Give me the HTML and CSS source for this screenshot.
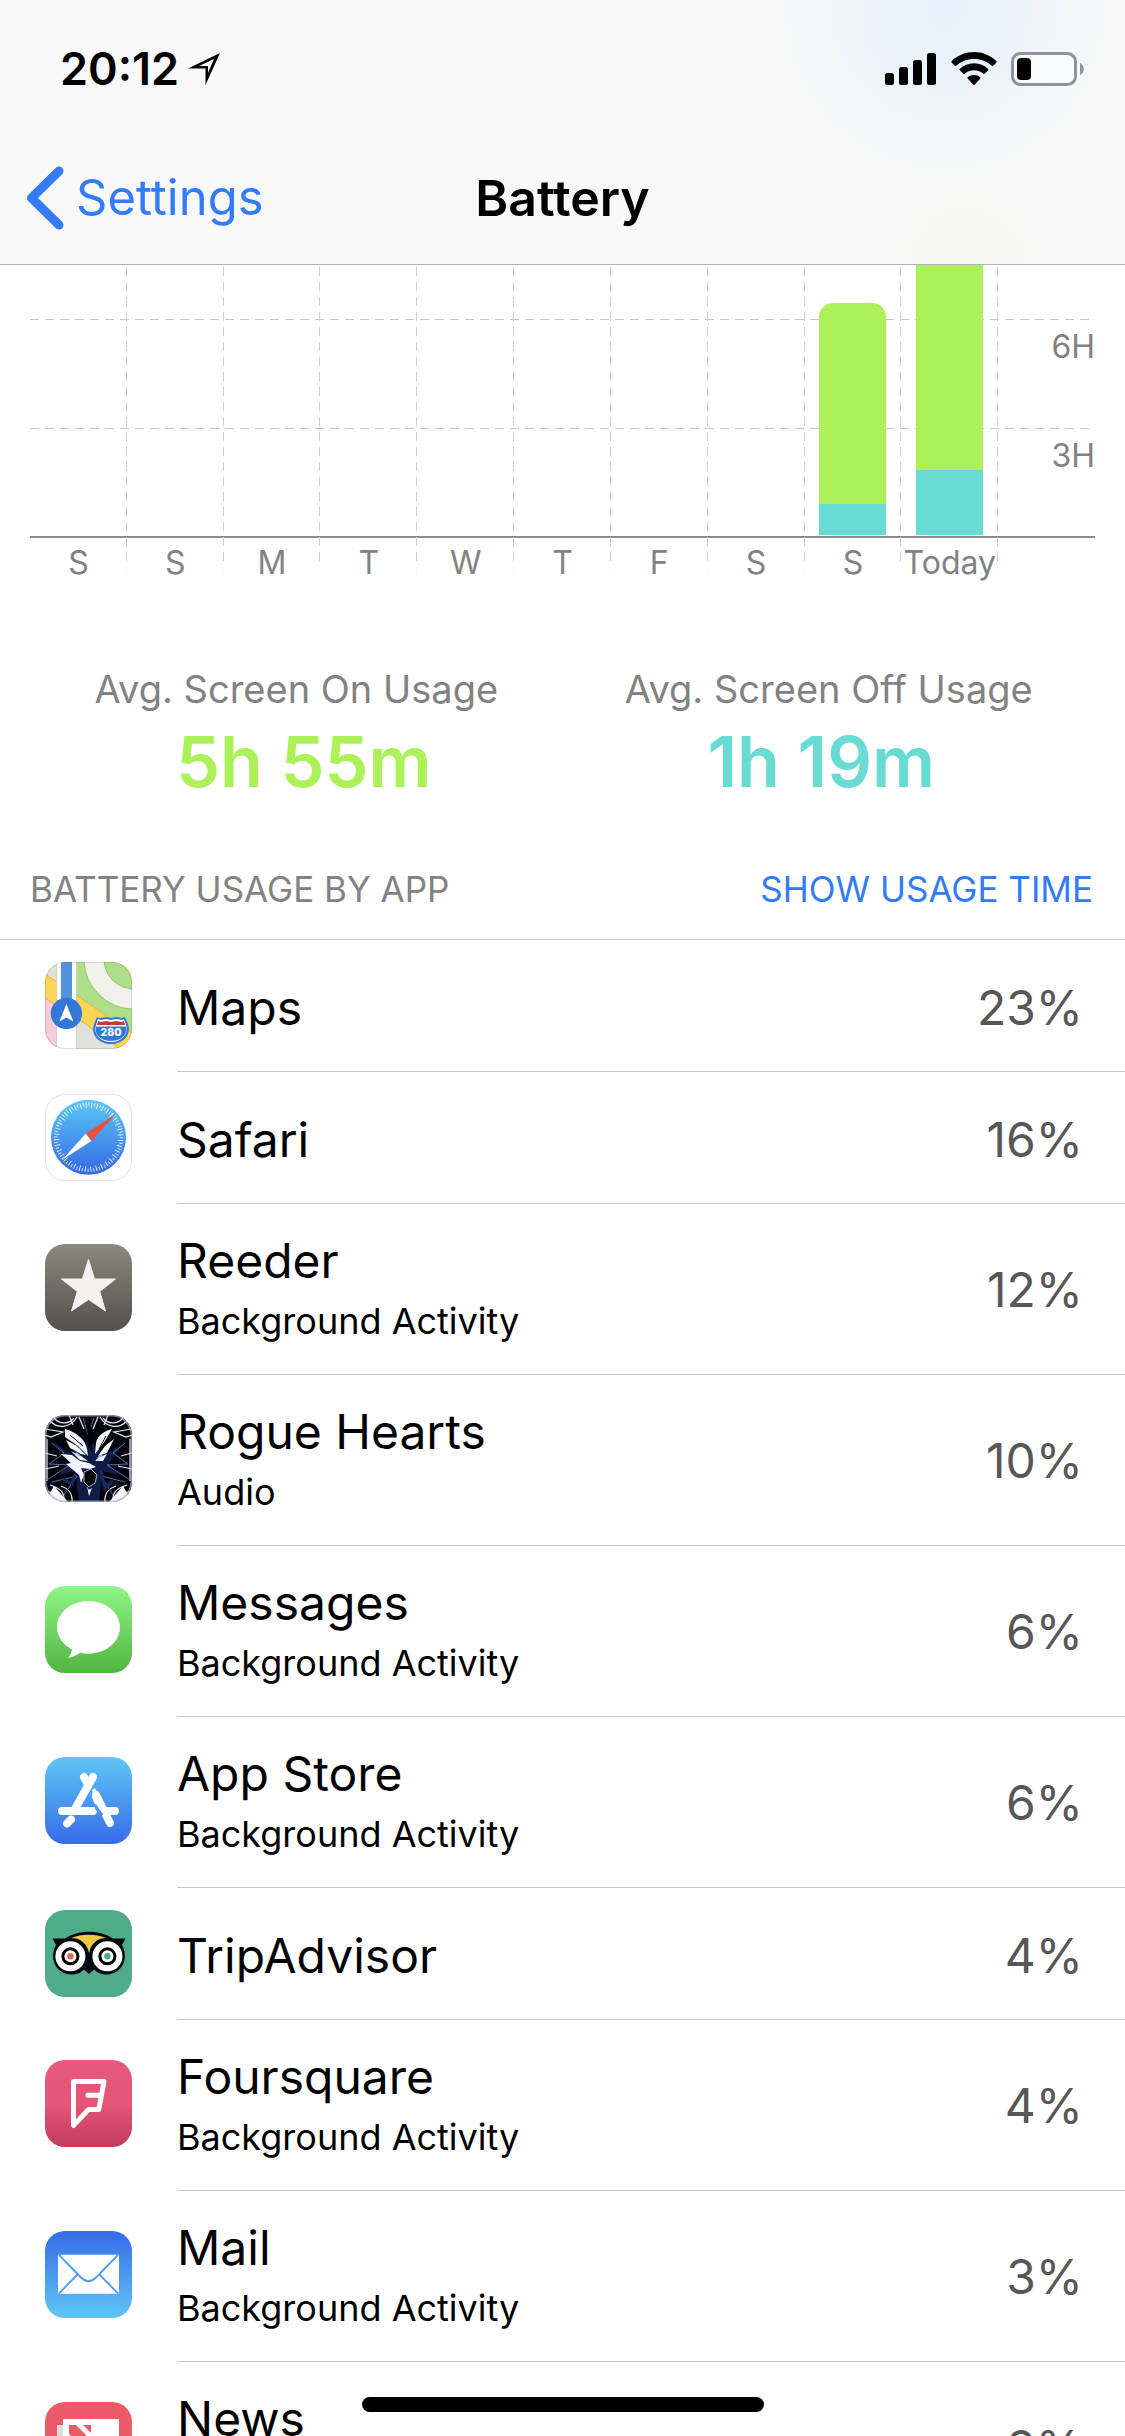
FILE: index.html
```html
<!DOCTYPE html>
<html lang="en">
<head>
<meta charset="utf-8">
<meta name="viewport" content="width=device-width, initial-scale=1">
<title>Battery</title>
<link rel="stylesheet" href="styles.css">
</head>
<body>
<div class="screen">
  <header class="top">
    <div class="status">
      <div class="status-left">
        <time>20:12</time>
        <svg width="34" height="34" viewBox="0 0 34 34" aria-hidden="true"><path fill="#000" fill-rule="evenodd" d="M33 1 18.500 33V16.500H1ZM27 7 12 14H21V21Z"/></svg>
      </div>
      <div class="status-right">
        <svg width="52" height="34" viewBox="0 0 52 34" aria-hidden="true"><rect x="0" y="21" width="9" height="12" rx="2.500"/><rect x="14" y="15" width="9" height="18" rx="2.500"/><rect x="28" y="8" width="9" height="25" rx="2.500"/><rect x="42" y="1" width="9" height="32" rx="2.500"/></svg>
        <svg width="46" height="34" viewBox="0 0 46 34" aria-hidden="true"><path d="M23 0C14.500 0 6.500 3.300.600 9.200a.8.800 0 0 0 0 1.200L4 13.800a.8.800 0 0 0 1.200 0C10 9.300 16 6.900 23 6.900s13 2.400 17.800 6.900a.8.800 0 0 0 1.200 0l3.400-3.400a.8.800 0 0 0 0-1.200C39.500 3.300 31.500 0 23 0ZM23 11.300c-5.500 0-10.400 2.200-14.200 5.700a.8.800 0 0 0 0 1.200l3.600 3.600a.8.800 0 0 0 1.100 0c2.600-2.400 5.800-3.600 9.500-3.600s6.900 1.200 9.500 3.600a.8.800 0 0 0 1.100 0l3.600-3.600a.8.800 0 0 0 0-1.200C33.400 13.500 28.500 11.300 23 11.300ZM23 23c-2.400 0-4.600.8-6.300 2.300a.8.800 0 0 0 0 1.200l5.700 6.200a.8.800 0 0 0 1.200 0l5.700-6.200a.8.800 0 0 0 0-1.200C27.600 23.800 25.400 23 23 23Z"/></svg>
        <svg width="74" height="34" viewBox="0 0 74 34" aria-hidden="true"><rect x="1.500" y="1.500" width="63" height="31" rx="8" fill="#fff" fill-opacity=".5" stroke="#929394" stroke-width="3"/><rect x="6" y="6" width="14" height="22" rx="4"/><path d="M69 11c5 2 5 10 0 12Z" fill="#929394"/></svg>
      </div>
    </div>
    <nav class="nav">
      <a class="back" href="#settings"><svg width="38" height="64" viewBox="0 0 38 64" aria-hidden="true"><path d="M33 5 5.500 32 33 59" fill="none" stroke="#347bf7" stroke-width="9" stroke-linecap="round" stroke-linejoin="round"/></svg><span>Settings</span></a>
      <h1>Battery</h1>
    </nav>
  </header>

  <main>
    <section class="chart" aria-label="Usage by day">
      <div class="hours">
        <div class="hour"></div>
        <div class="hour"><span>6H</span></div>
        <div class="hour"><span>3H</span></div>
      </div>
      <div class="days">
        <div class="day"><div class="plot"></div><span>S</span></div>
        <div class="day"><div class="plot"></div><span>S</span></div>
        <div class="day"><div class="plot"></div><span>M</span></div>
        <div class="day"><div class="plot"></div><span>T</span></div>
        <div class="day"><div class="plot"></div><span>W</span></div>
        <div class="day"><div class="plot"></div><span>T</span></div>
        <div class="day"><div class="plot"></div><span>F</span></div>
        <div class="day"><div class="plot"></div><span>S</span></div>
        <div class="day"><div class="plot"><div class="bar rounded" style="height:232px"><i style="height:31px"></i></div></div><span>S</span></div>
        <div class="day"><div class="plot"><div class="bar" style="height:270px"><i style="height:65px"></i></div></div><span>Today</span></div>
      </div>
    </section>

    <section class="totals">
      <div class="total-labels"><span>Avg. Screen On Usage</span><span>Avg. Screen Off Usage</span></div>
      <div class="total-values"><strong class="on">5h 55m</strong><strong class="off">1h 19m</strong></div>
    </section>

    <div class="list-head">
      <h2>BATTERY USAGE BY APP</h2>
      <button type="button">SHOW USAGE TIME</button>
    </div>

    <svg class="defs" width="0" height="0" aria-hidden="true">
      <defs>
        <clipPath id="tile"><rect width="87" height="87" rx="20"/></clipPath>
        <linearGradient id="g-safari" x2="0" y2="1"><stop stop-color="#5ac8f7"/><stop offset="1" stop-color="#3668e6"/></linearGradient>
        <linearGradient id="g-reeder" x2="0" y2="1"><stop stop-color="#8b897b"/><stop offset="1" stop-color="#51504d"/></linearGradient>
        <linearGradient id="g-messages" x2="0" y2="1"><stop stop-color="#8df688"/><stop offset="1" stop-color="#53b440"/></linearGradient>
        <linearGradient id="g-store" x2="0" y2="1"><stop stop-color="#5fc6f6"/><stop offset="1" stop-color="#376be8"/></linearGradient>
        <linearGradient id="g-four" x2="0" y2="1"><stop stop-color="#e8587b"/><stop offset=".5" stop-color="#e55577"/><stop offset="1" stop-color="#c23b5b"/></linearGradient>
        <linearGradient id="g-mail" x2="0" y2="1"><stop stop-color="#376be8"/><stop offset="1" stop-color="#5fc6f6"/></linearGradient>
      </defs>
    </svg>

    <ul class="apps">
      <li class="app">
        <svg class="icon" viewBox="0 0 87 87" aria-hidden="true"><g clip-path="url(#tile)">
          <rect width="87" height="87" fill="#e1e0d9"/>
          <path d="M31 0H87V71L31 33Z" fill="#aede88"/>
          <circle cx="89" cy="-3" r="40" fill="none" stroke="#9bc87c" stroke-width="21"/>
          <circle cx="89" cy="-3" r="40" fill="none" stroke="#f2f0eb" stroke-width="19"/>
          <path d="M31 33 87 71V96L31 55Z" fill="#f9d655"/><path d="M31 33 87 71M31 55 87 96" stroke="#f5ac37" fill="none"/>
          <path d="M0 12 12 20V44L0 36Z" fill="#f9d655"/><path d="M0 36 12 44V87H0Z" fill="#f7cbd7"/><path d="M0 12 12 20M0 36 12 44" stroke="#f5ac37"/>
          <rect x="11.500" width="20" height="87" fill="#fff"/><path d="M11.500 0V87M31.500 0V87" stroke="#c9c8c0" stroke-width=".8"/>
          <rect x="16" width="11" height="45" fill="#5093dc"/>
          <circle cx="21.400" cy="51.500" r="15.700" fill="#3477d6"/><path d="m21.400 42 7 17.500-7-4-7 4Z" fill="#fff"/>
          <path d="m52 55 3 1 6-1 5 1 5-1 6 1 3-1 3 7c4 12-6 20-17 20s-21-8-17-20Z" fill="#3477d6"/>
          <path d="m53 57 3 1 5-1 5 1 5-1 6 1 2-1 2 6c3 10-5 17-15 17s-18-7-15-17Z" fill="#fff"/>
          <path d="m53 59 3 1 5-1 5 1 5-1 5 1 3-1 1 4H52Z" fill="#cc3733"/><path d="M51 64.500H81C83 74 75 79 66 79S49 74 51 64.500Z" fill="#3477d6"/>
          <text x="66" y="73.500" text-anchor="middle" font-size="10.500" font-weight="800" fill="#fff">280</text>
        </g><rect x=".5" y=".5" width="86" height="86" rx="19.500" fill="none" stroke="#000" stroke-opacity=".12"/></svg>
        <div class="name"><h3>Maps</h3></div><span class="pct">23%</span>
      </li>
      <li class="app">
        <svg class="icon" viewBox="0 0 87 87" aria-hidden="true"><rect x=".5" y=".5" width="86" height="86" rx="19.500" fill="#fff" stroke="#e0e0e0"/>
          <circle cx="43.500" cy="43.300" r="37.500" fill="url(#g-safari)"/>
          <circle cx="43.500" cy="43.300" r="33" fill="none" stroke="#fff" stroke-opacity=".9" stroke-width="3.500" pathLength="144" stroke-dasharray=".6 3.400"/>
          <circle cx="43.500" cy="43.300" r="32" fill="none" stroke="#fff" stroke-width="5.500" pathLength="144" stroke-dasharray=".6 3.400" stroke-dashoffset="2"/>
          <path d="M71 20 40.800 39.500l5.500 7.500Z" fill="#eb4f3d"/><path d="M17 66 40.800 39.500l5.500 7.500Z" fill="#fff"/></svg>
        <div class="name"><h3>Safari</h3></div><span class="pct">16%</span>
      </li>
      <li class="app double">
        <svg class="icon" viewBox="0 0 87 87" aria-hidden="true"><rect width="87" height="87" rx="20" fill="url(#g-reeder)"/><path d="M43.500 15.500 49.500 35H70.500L54.700 47.500 60.500 67 43.500 55.500 26.500 67 32.300 47.500 16.500 35H37.500Z" fill="#f3f2ef" stroke="#f3f2ef" stroke-linejoin="round"/></svg>
        <div class="name"><h3>Reeder</h3><p>Background Activity</p></div><span class="pct">12%</span>
      </li>
      <li class="app double">
        <svg class="icon" viewBox="0 0 87 87" aria-hidden="true"><g clip-path="url(#tile)">
          <rect width="87" height="87" fill="#04050d"/>
          <path d="M8 26 24 48 14 60 30 56 34 87H54L57 56 74 60 64 48 80 26 60 40 43 24 27 40Z" fill="#101c48"/>
          <g fill="none" stroke="#e8e9f4" stroke-width="1.200"><path d="M5 6C14 15 26 12 32 2M9 3c6 7 15 6 20 0M82 6C73 15 61 12 55 2M78 3c-6 7-15 6-20 0M0 14l18 3-12 5L0 20M87 14 69 17l12 5 6-2M2 24V66M85 24V66M0 38l12 3M87 38 76 41M0 54l14-3M87 54 73 51M5 70C18 74 20 80 19 87M1 77c9-1 12 5 13 10M82 70C69 74 67 80 68 87M86 77c-9-1-12 5-13 10M27 87c1-9-5-14-11-16M60 87c-1-9 5-14 11-16M24 0l4 10M63 0l-4 10M34 2l5 12M53 2l-5 12"/></g>
          <g stroke="#6164a8" stroke-width="1" fill="none"><path d="M2 65 25 50 4 49 19 38 7 28M7 67 32 61 19 80M85 65 62 50 83 49 68 38 80 28M80 67 56 61 68 80M38 3 43 20 49 3"/></g>
          <g fill="#f4f5fc"><path d="M20 14C31 17 40 24 42 34L43 41 33 31 20 22ZM21 25 32 31 41 40 36 39 25 33ZM26 36 36 41 43 46 35 45ZM67 14C59 16 52 21 51 28L50 39 60 26ZM69 24 60 31 53 41 62 38ZM62 39 53 43 50 46 58 46Z"/><path d="M16 39 27 40 35 46 44 48 51 52 45 54 36 53 39 60 36 68 34 60 27 54 21 49 26 48ZM42 71 44 81 47 73 44 75ZM2 83 9 71 17 80 23 87H4ZM85 83 78 71 70 80 64 87H83Z"/></g>
          <path d="M43 8 48 18 46 36 43 28ZM25 20 38 31M61 21 54 34" fill="#02030a" stroke="#02030a"/>
          <path d="M31 38 35 41M57 40 53 43" stroke="#9fc2ff" stroke-width="2"/>
          <path d="M39 57 46 54 52 60 50 68 44 72 39 67Z" fill="#02030a" stroke="#aaadca" stroke-width="1"/>
          <path d="M56 56 60 73 68 66M30 59 27 69 18 64" stroke="#142b66" stroke-width="3" fill="none"/>
        </g><rect x=".8" y=".8" width="85.400" height="85.400" rx="19.500" fill="none" stroke="#b9bac7" stroke-width="1.500" stroke-opacity=".7"/></svg>
        <div class="name"><h3>Rogue Hearts</h3><p>Audio</p></div><span class="pct">10%</span>
      </li>
      <li class="app double">
        <svg class="icon" viewBox="0 0 87 87" aria-hidden="true"><rect width="87" height="87" rx="20" fill="url(#g-messages)"/><path d="M43.500 15C26 15 12 26.700 12 41.300c0 9 5.500 17.200 15 22.200-.5 3.500-2 6.200-4.200 8.300 5-.4 9-2.300 12.200-5 2.600.6 5.500.9 8.500.9C61 67.700 75 56 75 41.300S61 15 43.500 15Z" fill="#fff"/></svg>
        <div class="name"><h3>Messages</h3><p>Background Activity</p></div><span class="pct">6%</span>
      </li>
      <li class="app double">
        <svg class="icon" viewBox="0 0 87 87" aria-hidden="true"><rect width="87" height="87" rx="20" fill="url(#g-store)"/><g stroke="#fff" stroke-width="8" stroke-linecap="round" fill="none"><path d="M39 20 42 25.500M51 38 65 66M17 54H48M60 54H70M26 62.500 22 66.500"/></g><path d="M47 33 50 31 55 42 51 48C47 44 45 39 47 33Z" fill="#fff"/><path d="M51 50.500 57 58.500" stroke="#4287ec" stroke-width="3"/><path d="M48 20 30 52" stroke="#fff" stroke-width="8" stroke-linecap="round"/><path d="M47 34Q45 40 48 45L55 58" fill="none" stroke="#489bef" stroke-width="1.500"/></svg>
        <div class="name"><h3>App Store</h3><p>Background Activity</p></div><span class="pct">6%</span>
      </li>
      <li class="app">
        <svg class="icon" viewBox="0 0 87 87" aria-hidden="true"><rect width="87" height="87" rx="20" fill="#4fac8a"/><path d="M7.500 28.500H20C33 19.500 55 19.500 68 28.500H80.500L77 35c7 12 1 29-15 29.500-6 0-10-2-13-5l-5 4.500-5-4.500c-3 3-7 5-13 5C10 64 4 47 11 35Z" fill="#050a12"/><path d="M26 28C36 23.500 51 23.500 61.500 28 52 28 46 34 44 43 42 34 36 28 26 28Z" fill="#f0c844"/><g fill="#fff"><circle cx="25.400" cy="46.300" r="15"/><circle cx="62.400" cy="46.300" r="15"/></g><circle cx="25.400" cy="46.300" r="9"/><circle cx="62.400" cy="46.300" r="9"/><g fill="#fff"><circle cx="25.400" cy="46.300" r="6"/><circle cx="62.400" cy="46.300" r="6"/></g><circle cx="25.400" cy="46.300" r="3.200" fill="#e2694a"/><circle cx="62.400" cy="46.300" r="3.200" fill="#4fac8a"/></svg>
        <div class="name"><h3>TripAdvisor</h3></div><span class="pct">4%</span>
      </li>
      <li class="app double">
        <svg class="icon" viewBox="0 0 87 87" aria-hidden="true"><rect width="87" height="87" rx="20" fill="url(#g-four)"/><path d="M28.500 21.500H59L53.800 49.500H43.500L28.500 65.500ZM56.500 35.300H43" fill="none" stroke="#fff" stroke-width="5" stroke-linejoin="round" stroke-linecap="round"/></svg>
        <div class="name"><h3>Foursquare</h3><p>Background Activity</p></div><span class="pct">4%</span>
      </li>
      <li class="app double">
        <svg class="icon" viewBox="0 0 87 87" aria-hidden="true"><rect width="87" height="87" rx="20" fill="url(#g-mail)"/><rect x="13" y="23.700" width="61" height="39" rx="1" fill="#fff"/><path d="M14 24 36 46.500Q43.500 54 51 46.500L73 24M14 62.500 32.500 43.500M73 62.500 54.500 43.500" fill="none" stroke="#4c9ff0" stroke-width="1.800"/></svg>
        <div class="name"><h3>Mail</h3><p>Background Activity</p></div><span class="pct">3%</span>
      </li>
      <li class="app double">
        <svg class="icon" viewBox="0 0 87 87" aria-hidden="true"><rect width="87" height="87" rx="20" fill="#ea5a67"/><path d="M12 23H18V70H12Z" fill="#dcdcdc"/><path d="M18 17H74V70H18Z" fill="#fff"/><path d="M24 23H31L46 38V48H40L24 32ZM38 23H46V31Z" fill="#ea5a67"/></svg>
        <div class="name"><h3>News</h3><p>Background Activity</p></div><span class="pct">2%</span>
      </li>
    </ul>
  </main>
  <div class="home-indicator"></div>
</div>
</body>
</html>
```
FILE: styles.css
```css
* { box-sizing: border-box; }

body {
  margin: 0;
  background: #fff;
  color: #000;
  font-family: Inter, "Liberation Sans", sans-serif;
}

h1, h2, h3, p, ul { margin: 0; padding: 0; font-weight: 400; }

.screen {
  height: 100vh;
  overflow: hidden;
  display: flex;
  flex-direction: column;
}

.top {
  flex: none;
  border-bottom: 1px solid #b2b2b2;
  background:
    radial-gradient(circle at 84% 10px, #e5f2f9 0, #ebf2fa 70px, #f3f6f8 115px, #f8f8f800 180px),
    radial-gradient(circle at 86% 100%, #f6f7f2 0, #f8f8f800 90px),
    #f8f8f8;
}

.status {
  height: 132px;
  padding: 6px 40px 0 60px;
  display: flex;
  align-items: center;
  justify-content: space-between;
}
.status-left, .status-right { display: flex; align-items: center; }
.status-left { gap: 8px; }
.status-left time { font-size: 45px; font-weight: 600; line-height: 54px; }
.status-right { gap: 14px; }

.nav {
  height: 132px;
  padding: 0 26px;
  display: grid;
  grid-template-columns: 1fr auto 1fr;
  align-items: center;
}
.back {
  display: flex;
  align-items: center;
  gap: 12px;
  color: #347bf7;
  font-size: 49px;
  line-height: 60px;
  text-decoration: none;
}
.nav h1 { font-size: 50px; font-weight: 600; line-height: 60px; }

main { flex: 1; min-height: 0; overflow: hidden; }

/* The hour lines and the day columns share one grid cell */
.chart { display: grid; padding: 0 30px; }
.hours, .days { grid-area: 1 / 1; }
.hours { display: grid; grid-template-rows: 55px 109px 109px; align-content: start; }
.hour {
  text-align: right;
  background: linear-gradient(90deg, #c8c8c8 9px, transparent 9px) bottom left / 15px 1px repeat-x;
}
.hour:last-child { background: none; border-bottom: 2px solid #8b8b8b; }
.hour span { display: block; padding-top: 7px; }
.hour span, .day span { font-size: 32px; line-height: 40px; color: #828282; }

.days { display: grid; grid-template-columns: repeat(11, 1fr); }
.day {
  display: flex;
  flex-direction: column;
  align-items: center;
  background:
    linear-gradient(#fff, #fff) bottom / 100% 22px no-repeat,
    linear-gradient(#cfcfcf 9px, transparent 9px) right 2px / 1px 15px repeat-y;
}
.day span { height: 45px; padding-top: 5px; white-space: nowrap; }
.plot {
  width: 67px;
  height: 273px;
  padding-bottom: 3px;
  display: flex;
  align-items: flex-end;
}
.bar {
  flex: 1;
  display: flex;
  align-items: flex-end;
  background: #adf15a;
}
.bar i { flex: 1; background: #68dbd2; }
.rounded { border-radius: 14px 14px 0 0; }

.totals { padding-top: 82px; text-align: center; }
.total-labels, .total-values { display: grid; grid-template-columns: 1fr 1fr; }
.total-labels { padding: 0 30px; font-size: 38px; line-height: 48px; color: #828282; }
.total-values { padding: 7px 45px 0; font-size: 70px; line-height: 84px; }
.total-values strong { font-weight: 600; }
.on { color: #adf15a; }
.off { color: #68dbd2; }

.list-head {
  height: 136px;
  padding: 34px 32px 0 30px;
  display: flex;
  align-items: center;
  justify-content: space-between;
  border-bottom: 1px solid #c8c7cc;
}
.list-head h2, .list-head button { font-size: 35px; line-height: 44px; }
.list-head h2 { color: #828282; }
.list-head button {
  padding: 0;
  border: 0;
  background: none;
  color: #347bf7;
  font-family: inherit;
}

.defs { display: block; }
.apps { list-style: none; }
.app {
  display: grid;
  grid-template-columns: 87px 1fr auto;
  align-items: center;
  column-gap: 45px;
  min-height: 132px;
  padding: 0 42px 2px 45px;
  background: linear-gradient(#c8c8c8, #c8c8c8) 177px 100% / 100% 1px no-repeat;
}
.double { min-height: 171px; padding-bottom: 5px; }
.icon { display: block; width: 87px; height: 87px; }
.icon text { font-family: Inter, "Liberation Sans", sans-serif; }
.name h3, .pct { font-size: 48px; line-height: 60px; }
.name, .pct { padding-top: 6px; }
.double .name { padding-top: 0; }
.name p { font-size: 36px; line-height: 44px; padding-top: 8px; }
.pct { color: #575757; }

.home-indicator {
  position: fixed;
  bottom: 24px;
  left: 50%;
  width: 402px;
  height: 15px;
  margin-left: -201px;
  border-radius: 8px;
  background: #000;
}
```
